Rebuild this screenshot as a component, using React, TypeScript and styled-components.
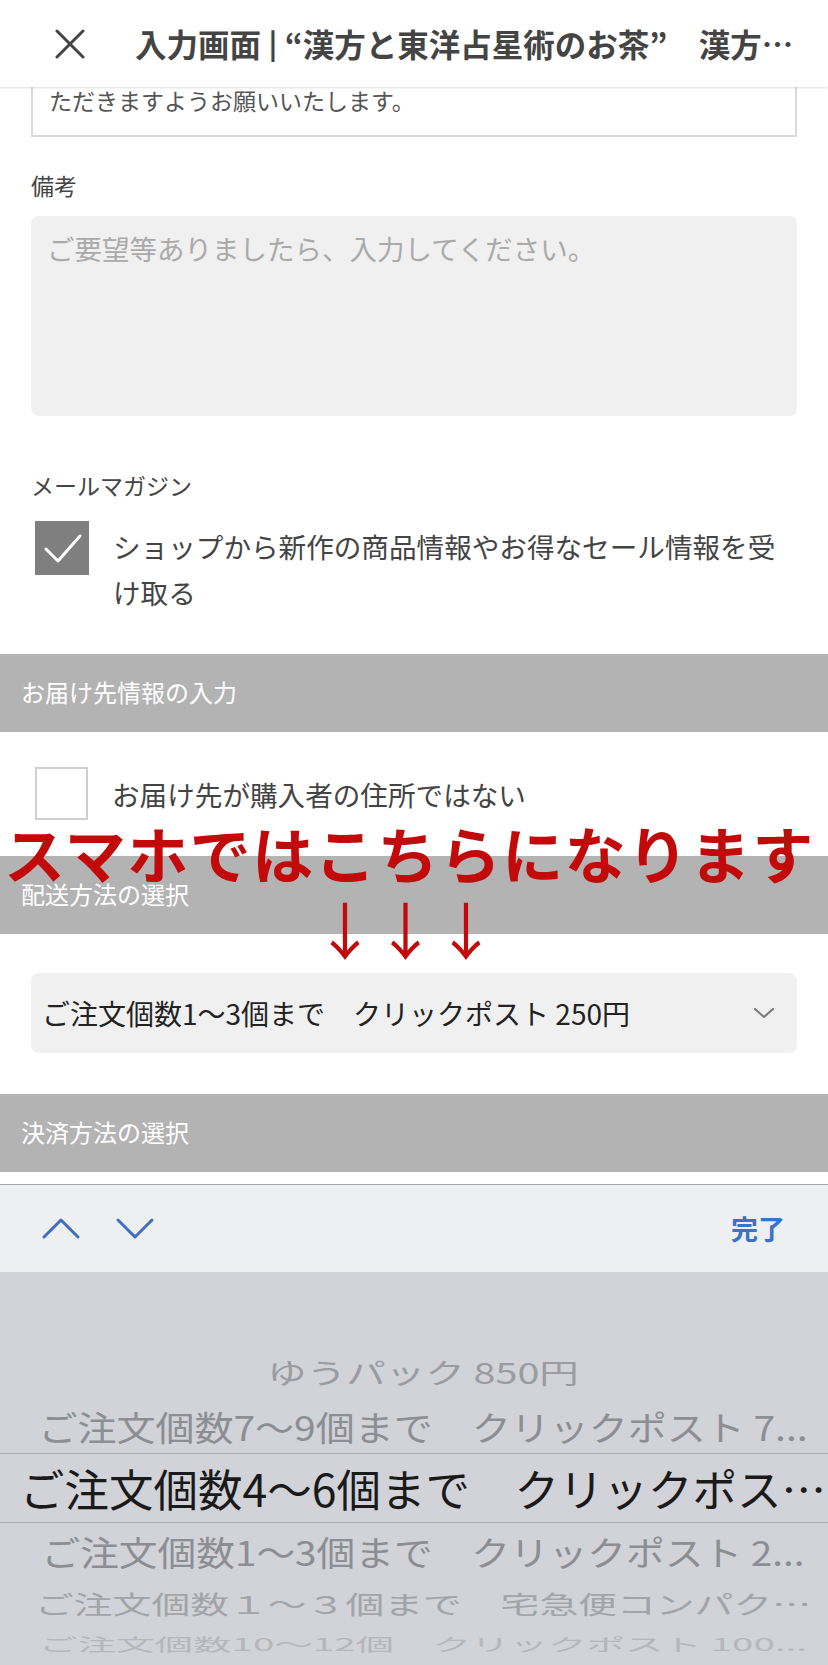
import React from "react";
import styled, { createGlobalStyle } from "styled-components";

const GlobalStyle = createGlobalStyle`
  html, body { margin: 0; padding: 0; background: #fff; }
  body {
    font-family: "Noto Sans CJK JP", "Noto Sans", sans-serif;
    -webkit-font-smoothing: antialiased;
  }
  * { box-sizing: border-box; }
`;

const Page = styled.div`
  position: relative;
  width: 828px;
  height: 1665px;
  overflow: hidden;
  display: flex;
  flex-direction: column;
  background: #fff;
`;

const Header = styled.header`
  position: relative;
  z-index: 2;
  flex: none;
  height: 87px;
  display: flex;
  align-items: center;
  gap: 50px;
  padding: 0 28px 0 55px;
  background: #fff;
  box-shadow: 0 1px 2px rgba(0, 0, 0, 0.13);
`;

const HeaderTitle = styled.h1`
  flex: 1;
  min-width: 0;
  margin: 0;
  font-size: 31.5px;
  line-height: 1.2;
  font-weight: 700;
  color: #444;
  white-space: nowrap;
  overflow: hidden;
`;

const NoteBox = styled.div`
  flex: none;
  margin: 0 31px;
  height: 50px;
  border: 2px solid #dadada;
  border-top: none;
  padding-left: 16px;
  font-size: 23px;
  line-height: 26px;
  color: #555;
`;

const FieldLabel = styled.div<{ $mt: number }>`
  flex: none;
  margin: ${(p) => p.$mt}px 31px 0;
  font-size: 23px;
  line-height: 34px;
  color: #444;
`;

const Memo = styled.textarea`
  flex: none;
  display: block;
  margin: 14px 31px 0;
  width: calc(100% - 62px);
  height: 200px;
  border: none;
  border-radius: 8px;
  background: #f0f0f0;
  padding: 15px 16px;
  font-family: inherit;
  font-size: 27.5px;
  line-height: 34px;
  color: #333;
  resize: none;
  outline: none;
  &::placeholder { color: #aaa; }
`;

const CheckRow = styled.div<{ $mt: number; $align: string }>`
  flex: none;
  display: flex;
  align-items: ${(p) => p.$align};
  gap: 24px;
  margin: ${(p) => p.$mt}px 31px 0 35px;
`;

const CheckBox = styled.div<{ $checked: boolean }>`
  flex: none;
  width: ${(p) => (p.$checked ? 54 : 53)}px;
  height: ${(p) => (p.$checked ? 54 : 53)}px;
  background: ${(p) => (p.$checked ? "#7f7f7f" : "#fff")};
  border: ${(p) => (p.$checked ? "none" : "2px solid #cfcfcf")};
  display: flex;
  align-items: center;
  justify-content: center;
`;

const CheckLabel = styled.div<{ $mt: number }>`
  flex: 1;
  margin-top: ${(p) => p.$mt}px;
  font-size: 27.6px;
  line-height: 46px;
  color: #444;
`;

const SectionBar = styled.div<{ $mt: number }>`
  flex: none;
  margin-top: ${(p) => p.$mt}px;
  height: 78px;
  background: #b3b3b3;
  color: #fff;
  font-size: 24px;
  display: flex;
  align-items: center;
  padding: 0 0 3px 21px;
`;

const SelectBox = styled.div`
  flex: none;
  margin: 39px 31px 0;
  height: 80px;
  border-radius: 8px;
  background: #f0f0f0;
  display: flex;
  align-items: center;
  justify-content: space-between;
  padding: 0 22px 0 11px;
  font-size: 28px;
  color: #222;
`;

const Spacer = styled.div`
  flex: 1;
`;

const KeyboardPanel = styled.div`
  flex: none;
  display: flex;
  flex-direction: column;
`;

const AccessoryBar = styled.div`
  height: 88px;
  border-top: 1px solid #a7a7a7;
  background: #eeeff1;
  display: flex;
  align-items: center;
  padding: 0 43px 0 41px;
`;

const NavGroup = styled.div`
  display: flex;
  align-items: center;
  gap: 34px;
  flex: 1;
`;

const DoneButton = styled.span`
  font-size: 27px;
  font-weight: 700;
  color: #3b72c9;
  line-height: 1;
`;

const Picker = styled.div`
  height: 393px;
  background: #d1d3d8;
  display: flex;
  flex-direction: column;
  padding-top: 73px;
`;

const PickerRow = styled.div<{ $h: number; $selected?: boolean }>`
  flex: none;
  height: ${(p) => p.$h}px;
  display: flex;
  align-items: center;
  justify-content: center;
  padding-left: 18px;
  overflow: hidden;
  border-top: ${(p) => (p.$selected ? "1px solid #a9acb1" : "none")};
  border-bottom: ${(p) => (p.$selected ? "1px solid #a9acb1" : "none")};
`;

const PickerText = styled.span<{ $size: number; $color: string; $sy: number }>`
  font-size: ${(p) => p.$size}px;
  line-height: 1;
  color: ${(p) => p.$color};
  white-space: nowrap;
  transform: scaleY(${(p) => p.$sy});
`;

const Annotation = styled.div`
  position: absolute;
  z-index: 3;
  top: 820px;
  left: 0;
  right: 0;
  pointer-events: none;
  color: #c20a0a;
`;

const AnnotationText = styled.div`
  padding-left: 4px;
  font-size: 61px;
  line-height: 66px;
  font-weight: 700;
  letter-spacing: 1.5px;
  white-space: nowrap;
`;

const ArrowRow = styled.div`
  display: flex;
  margin: 12px 0 0 314px;
`;

const Arrow = styled.span`
  width: 60.5px;
  text-align: center;
  font-size: 62px;
  line-height: 60px;
  font-weight: 400;
`;

const CloseIcon = () => (
  <svg width="30" height="30" viewBox="0 0 30 30" aria-hidden>
    <path d="M2 2 L28 28 M28 2 L2 28" stroke="#444" strokeWidth="3" strokeLinecap="round" fill="none" />
  </svg>
);

const CheckMark = () => (
  <svg width="54" height="54" viewBox="0 0 54 54" aria-hidden>
    <polyline points="11,28 23,40 45,15" stroke="#fff" strokeWidth="3" fill="none" strokeLinecap="round" strokeLinejoin="round" />
  </svg>
);

const Chevron = ({ dir, color, w, h, sw }: { dir: "up" | "down"; color: string; w: number; h: number; sw: number }) => (
  <svg width={w} height={h} viewBox={`0 0 ${w} ${h}`} aria-hidden>
    <polyline
      points={
        dir === "up"
          ? `${sw},${h - sw} ${w / 2},${sw} ${w - sw},${h - sw}`
          : `${sw},${sw} ${w / 2},${h - sw} ${w - sw},${sw}`
      }
      stroke={color}
      strokeWidth={sw}
      fill="none"
      strokeLinecap="round"
      strokeLinejoin="round"
    />
  </svg>
);

const pickerRows = [
  { text: "ゆうパック 850円", h: 54, size: 39.5, color: "#9a9ca1", sy: 0.72 },
  { text: "ご注文個数7〜9個まで　クリックポスト 7...", h: 54, size: 39, color: "#8c8e93", sy: 0.88 },
  { text: "ご注文個数4〜6個まで　クリックポス…", h: 70, size: 44.5, color: "#1a1a1a", sy: 1, selected: true },
  { text: "ご注文個数1〜3個まで　クリックポスト 2...", h: 56, size: 38.7, color: "#8c8e93", sy: 0.88 },
  { text: "ご注文個数１〜３個まで　宅急便コンパク…", h: 48, size: 38.8, color: "#a2a4a8", sy: 0.64 },
  { text: "ご注文個数10〜12個　クリックポスト 100...", h: 33, size: 38.5, color: "#b5b7bb", sy: 0.45 },
];

export default function App() {
  return (
    <>
      <GlobalStyle />
      <Page>
        <Header>
          <CloseIcon />
          <HeaderTitle>入力画面 | “漢方と東洋占星術のお茶”　漢方…</HeaderTitle>
        </Header>

        <NoteBox>ただきますようお願いいたします。</NoteBox>

        <FieldLabel $mt={31}>備考</FieldLabel>
        <Memo placeholder="ご要望等ありましたら、入力してください。" />

        <FieldLabel $mt={52}>メールマガジン</FieldLabel>
        <CheckRow $mt={19} $align="flex-start">
          <CheckBox $checked>
            <CheckMark />
          </CheckBox>
          <CheckLabel $mt={2}>ショップから新作の商品情報やお得なセール情報を受け取る</CheckLabel>
        </CheckRow>

        <SectionBar $mt={39}>お届け先情報の入力</SectionBar>

        <CheckRow $mt={35} $align="center">
          <CheckBox $checked={false} />
          <CheckLabel $mt={0}>お届け先が購入者の住所ではない</CheckLabel>
        </CheckRow>

        <SectionBar $mt={36}>配送方法の選択</SectionBar>

        <SelectBox>
          <span>ご注文個数1〜3個まで　クリックポスト 250円</span>
          <Chevron dir="down" color="#777" w={22} h={12} sw={2} />
        </SelectBox>

        <SectionBar $mt={41}>決済方法の選択</SectionBar>

        <Spacer />

        <KeyboardPanel>
          <AccessoryBar>
            <NavGroup>
              <Chevron dir="up" color="#3c6ec4" w={40} h={23} sw={3} />
              <Chevron dir="down" color="#3c6ec4" w={40} h={23} sw={3} />
            </NavGroup>
            <DoneButton>完了</DoneButton>
          </AccessoryBar>
          <Picker>
            {pickerRows.map((r) => (
              <PickerRow key={r.text} $h={r.h} $selected={r.selected}>
                <PickerText $size={r.size} $color={r.color} $sy={r.sy}>
                  {r.text}
                </PickerText>
              </PickerRow>
            ))}
          </Picker>
        </KeyboardPanel>

        <Annotation>
          <AnnotationText>スマホではこちらになります</AnnotationText>
          <ArrowRow>
            <Arrow>↓</Arrow>
            <Arrow>↓</Arrow>
            <Arrow>↓</Arrow>
          </ArrowRow>
        </Annotation>
      </Page>
    </>
  );
}
